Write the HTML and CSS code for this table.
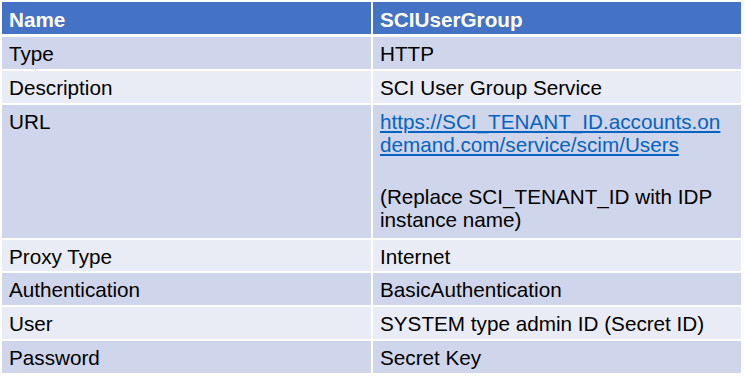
FILE: index.html
```html
<!DOCTYPE html>
<html>
<head>
<meta charset="utf-8">
<link rel="stylesheet" href="styles.css">
</head>
<body>
<div class="table">
  <div class="cell head">Name</div>
  <div class="cell head">SCIUserGroup</div>

  <div class="cell dark">Type</div>
  <div class="cell dark">HTTP</div>

  <div class="cell light">Description</div>
  <div class="cell light">SCI User Group Service</div>

  <div class="cell dark">URL</div>
  <div class="cell dark url-cell">
    <a class="link" href="#">https://SCI_TENANT_ID.accounts.on<br>demand.com/service/scim/Users</a>
    <div class="blank"></div>
    <div>(Replace SCI_TENANT_ID with IDP<br>instance name)</div>
  </div>

  <div class="cell light">Proxy Type</div>
  <div class="cell light">Internet</div>

  <div class="cell dark">Authentication</div>
  <div class="cell dark">BasicAuthentication</div>

  <div class="cell light">User</div>
  <div class="cell light">SYSTEM type admin ID (Secret ID)</div>

  <div class="cell dark">Password</div>
  <div class="cell dark">Secret Key</div>
</div>
</body>
</html>
```
FILE: styles.css
```css
html, body {
  margin: 0;
  padding: 0;
  background: #ffffff;
}

body {
  font-family: "Liberation Sans", Arial, sans-serif;
  font-size: 20.7px;
  line-height: 23.5px;
  color: #000000;
}

.table {
  margin: 2px 0 0 2px;
  width: 739px;
  display: grid;
  grid-template-columns: 369px 368px;
  column-gap: 2px;
  row-gap: 2px;
}

.cell {
  padding: 5px 7px 3.25px 7px;
  white-space: nowrap;
}

.head {
  background: #4472C4;
  color: #ffffff;
  font-weight: bold;
  padding-top: 6px;
  padding-bottom: 2.5px;
  margin-bottom: 1px;
}

.dark {
  background: #CFD5EA;
}

.light {
  background: #E9EBF5;
}

.link {
  color: #0563C1;
  text-decoration: underline;
  text-underline-offset: 2px;
}

.blank {
  height: 28px;
}

.url-cell {
  padding-bottom: 6px;
}
```
